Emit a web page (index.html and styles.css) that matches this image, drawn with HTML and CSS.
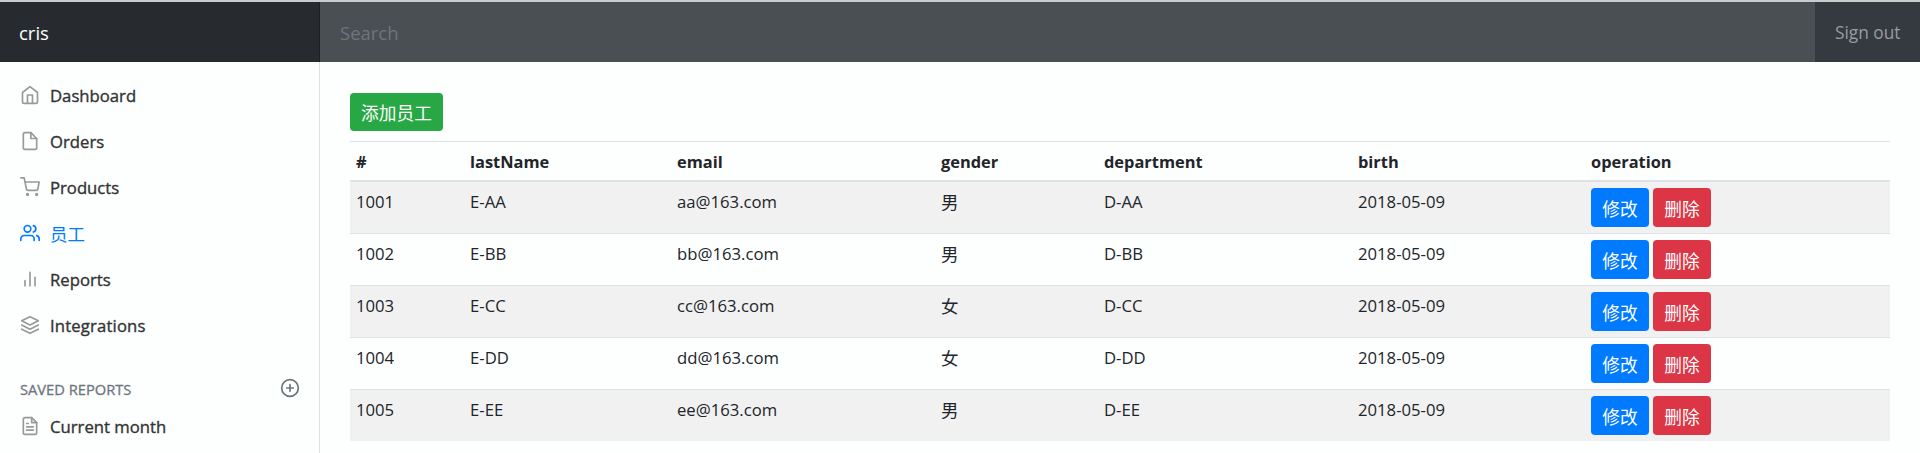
FILE: index.html
```html
<!DOCTYPE html>
<html lang="zh-CN">
<head>
<meta charset="utf-8">
<title>cris</title>
<link rel="stylesheet" href="styles.css">
</head>
<body>
<header class="navbar">
  <a class="brand">cris</a>
  <input class="search" type="text" placeholder="Search">
  <a class="signout">Sign out</a>
</header>
<div class="layout">
  <nav class="sidebar">
    <a class="nav-link"><svg class="icon" viewBox="0 0 24 24"><path d="M3 9l9-7 9 7v11a2 2 0 0 1-2 2H5a2 2 0 0 1-2-2z"/><path d="M9 22V12h6v10"/></svg><span>Dashboard</span></a>
    <a class="nav-link"><svg class="icon" viewBox="0 0 24 24"><path d="M13 2H6a2 2 0 0 0-2 2v16a2 2 0 0 0 2 2h12a2 2 0 0 0 2-2V9z"/><path d="M13 2v7h7"/></svg><span>Orders</span></a>
    <a class="nav-link"><svg class="icon" viewBox="0 0 24 24"><circle cx="9" cy="21" r="1"/><circle cx="20" cy="21" r="1"/><path d="M1 1h4l2.68 13.39a2 2 0 0 0 2 1.61h9.72a2 2 0 0 0 2-1.61L23 6H6"/></svg><span>Products</span></a>
    <a class="nav-link active"><svg class="icon" viewBox="0 0 24 24"><path d="M17 21v-2a4 4 0 0 0-4-4H5a4 4 0 0 0-4 4v2"/><circle cx="9" cy="7" r="4"/><path d="M23 21v-2a4 4 0 0 0-3-3.87"/><path d="M16 3.13a4 4 0 0 1 0 7.75"/></svg><span>员工</span></a>
    <a class="nav-link"><svg class="icon" viewBox="0 0 24 24"><path d="M18 20V10M12 20V4M6 20v-6"/></svg><span>Reports</span></a>
    <a class="nav-link"><svg class="icon" viewBox="0 0 24 24"><path d="M12 2L2 7l10 5 10-5-10-5z"/><path d="M2 17l10 5 10-5"/><path d="M2 12l10 5 10-5"/></svg><span class="wide">Integrations</span></a>
    <h6 class="heading"><span>Saved reports</span><svg class="icon" viewBox="0 0 24 24"><circle cx="12" cy="12" r="10"/><path d="M12 8v8M8 12h8"/></svg></h6>
    <a class="nav-link"><svg class="icon" viewBox="0 0 24 24"><path d="M14 2H6a2 2 0 0 0-2 2v16a2 2 0 0 0 2 2h12a2 2 0 0 0 2-2V8z"/><path d="M14 2v6h6M16 13H8M16 17H8M10 9H8"/></svg><span>Current month</span></a>
  </nav>
  <main class="content">
    <button class="btn btn-success">添加员工</button>
    <table class="table">
      <colgroup><col class="c-id"><col class="c-name"><col class="c-email"><col class="c-gender"><col class="c-dept"><col class="c-birth"><col></colgroup>
      <thead><tr><th>#</th><th>lastName</th><th>email</th><th>gender</th><th>department</th><th>birth</th><th>operation</th></tr></thead>
      <tbody>
        <tr><td>1001</td><td>E-AA</td><td>aa@163.com</td><td class="cjk">男</td><td>D-AA</td><td>2018-05-09</td><td><div class="actions"><button class="btn btn-primary">修改</button><button class="btn btn-danger">删除</button></div></td></tr>
        <tr><td>1002</td><td>E-BB</td><td>bb@163.com</td><td class="cjk">男</td><td>D-BB</td><td>2018-05-09</td><td><div class="actions"><button class="btn btn-primary">修改</button><button class="btn btn-danger">删除</button></div></td></tr>
        <tr><td>1003</td><td>E-CC</td><td>cc@163.com</td><td class="cjk">女</td><td>D-CC</td><td>2018-05-09</td><td><div class="actions"><button class="btn btn-primary">修改</button><button class="btn btn-danger">删除</button></div></td></tr>
        <tr><td>1004</td><td>E-DD</td><td>dd@163.com</td><td class="cjk">女</td><td>D-DD</td><td>2018-05-09</td><td><div class="actions"><button class="btn btn-primary">修改</button><button class="btn btn-danger">删除</button></div></td></tr>
        <tr><td>1005</td><td>E-EE</td><td>ee@163.com</td><td class="cjk">男</td><td>D-EE</td><td>2018-05-09</td><td><div class="actions"><button class="btn btn-primary">修改</button><button class="btn btn-danger">删除</button></div></td></tr>
      </tbody>
    </table>
  </main>
</div>
</body>
</html>
```

FILE: styles.css
```css
* { box-sizing: border-box; }
html, body { margin: 0; height: 453px; overflow: hidden; }
body {
  display: flex;
  flex-direction: column;
  background: #fdfefe;
  color: #212529;
  font: 16.7px/26px "Open Sans", "Noto Sans", "Noto Sans CJK SC", sans-serif;
}
.navbar {
  display: flex;
  flex: none;
  height: 62px;
  border-top: 2px solid #c9cccd;
  background: #343a40;
}
.brand {
  width: 320px;
  padding: 0 19px;
  background: #272b30;
  box-shadow: inset -1px 0 0 #1d2023;
  color: #fff;
  font-size: 18.5px;
  line-height: 62px;
}
.search {
  flex: 1;
  min-width: 0;
  padding: 0 20px;
  border: 0;
  background: #494f53;
  color: #fff;
  font: 18.5px "Open Sans", "Noto Sans", sans-serif;
}
.search::placeholder { color: #6c757d; opacity: 1; }
.signout {
  width: 105px;
  padding-left: 20px;
  color: #999c9f;
  font-size: 17.3px;
  line-height: 62px;
  white-space: nowrap;
}
.layout { display: flex; flex: 1; min-height: 0; }
.sidebar {
  width: 320px;
  flex: none;
  padding-top: 10px;
  border-right: 1px solid #dfe0e2;
}
.nav-link {
  display: flex;
  align-items: center;
  gap: 10px;
  height: 46px;
  padding-left: 20px;
  color: #333;
  -webkit-text-stroke: 0.35px currentColor;
}
.nav-link span { padding-top: 1px; }
.wide { letter-spacing: 0.15px; }
.icon {
  width: 20px;
  height: 20px;
  flex: none;
  fill: none;
  stroke: #999;
  stroke-width: 2;
  stroke-linecap: round;
  stroke-linejoin: round;
}
.active {
  color: #007bff;
  font-size: 17.5px;
  -webkit-text-stroke: 0;
}
.active .icon { stroke: #007bff; }
.heading {
  display: flex;
  align-items: center;
  justify-content: space-between;
  height: 20px;
  margin: 30px 19px 5px 20px;
  color: #6c757d;
  font-size: 14.7px;
  font-weight: 400;
  -webkit-text-stroke: 0.3px currentColor;
  text-transform: uppercase;
}
.heading span { padding-top: 1px; }
.heading .icon { stroke: #6c757d; }
.content { flex: 1; padding: 31px 30px 0; }
.btn {
  display: block;
  height: 39px;
  padding: 0 11px;
  border: 0;
  border-radius: 4px;
  color: #fff;
  font: 17.7px/38px "Noto Sans CJK SC", sans-serif;
  white-space: nowrap;
}
.btn-success { width: 93px; height: 38px; background: #28a745; line-height: 36px; }
.btn-primary { width: 58px; background: #007bff; }
.btn-danger { width: 58px; background: #dc3545; }
.actions { display: flex; gap: 4px; margin-top: -1px; }
.table {
  width: 1540px;
  margin-top: 10px;
  border-collapse: separate;
  border-spacing: 0;
  table-layout: fixed;
}
.c-id { width: 114px; }
.c-name { width: 207px; }
.c-email { width: 264px; }
.c-gender { width: 163px; }
.c-dept { width: 254px; }
.c-birth { width: 233px; }
.table th {
  height: 41px;
  padding: 2px 6px 0;
  border-top: 1px solid #dee2e6;
  border-bottom: 2px solid #dee2e6;
  font-size: 16.4px;
  font-weight: 700;
  text-align: left;
}
.table td {
  height: 52px;
  padding: 7px 6px 0;
  border-bottom: 1px solid #dee2e6;
  vertical-align: top;
}
.table .cjk { font-size: 17.5px; }
.table tbody tr:nth-child(odd) { background: #f1f1f2; }
.table tbody tr:last-child td { height: 51px; border-bottom: 0; }
```
